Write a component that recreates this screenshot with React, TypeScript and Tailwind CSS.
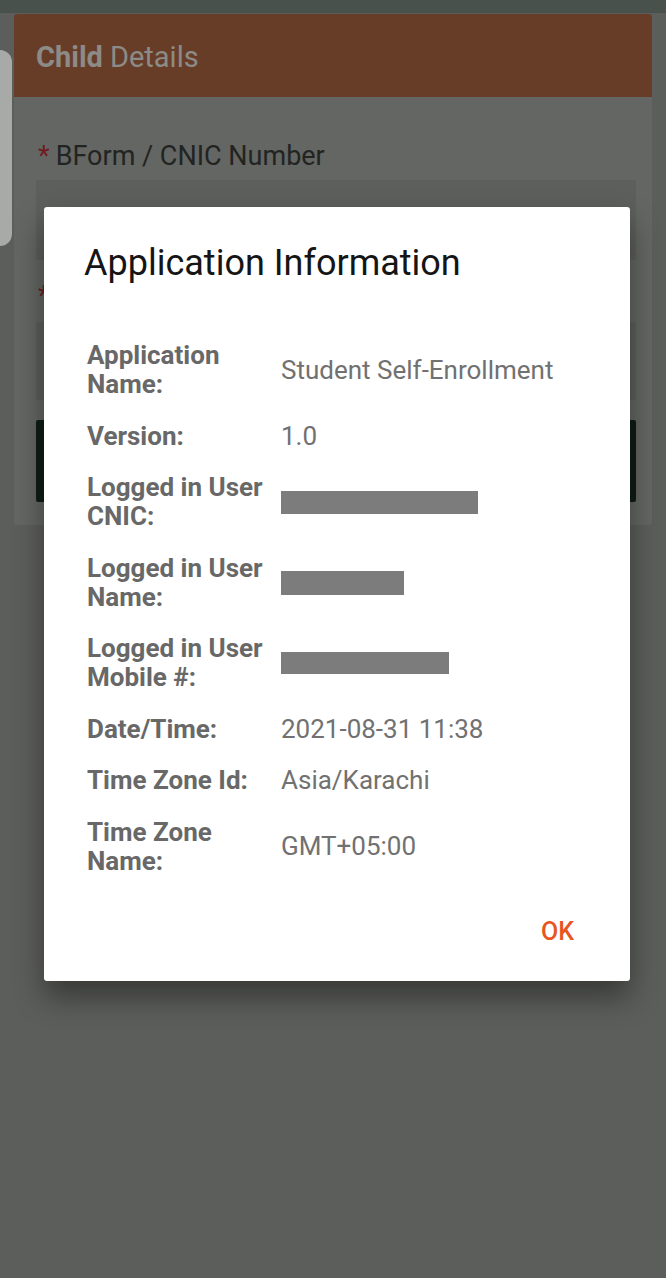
import React from "react";

type Row = {
  label: string[];
  value?: string;
  redact?: { w: string; h: string };
};

const rows: Row[] = [
  { label: ["Application", "Name:"], value: "Student Self-Enrollment" },
  { label: ["Version:"], value: "1.0" },
  { label: ["Logged in User", "CNIC:"], redact: { w: "w-[197px]", h: "h-[23px]" } },
  { label: ["Logged in User", "Name:"], redact: { w: "w-[123px]", h: "h-[24px]" } },
  { label: ["Logged in User", "Mobile #:"], redact: { w: "w-[168px]", h: "h-[22px]" } },
  { label: ["Date/Time:"], value: "2021-08-31 11:38" },
  { label: ["Time Zone Id:"], value: "Asia/Karachi" },
  { label: ["Time Zone", "Name:"], value: "GMT+05:00" },
];

function InfoRow({ row }: { row: Row }) {
  return (
    <div className="flex items-center">
      <div className="w-[194px] shrink-0 text-[26px] leading-[29px] font-bold text-[#686868]">
        {row.label.map((l) => (
          <div key={l}>{l}</div>
        ))}
      </div>
      {row.value ? (
        <div className="text-[26px] leading-[29px] text-[#717171]">{row.value}</div>
      ) : (
        <div className={`${row.redact!.w} ${row.redact!.h} bg-[#7c7c7c]`} />
      )}
    </div>
  );
}

export default function App() {
  return (
    <div
      className="relative w-[666px] h-[1278px] overflow-hidden bg-[#5c5e5b]"
      style={{ fontFamily: "Roboto, 'Liberation Sans', sans-serif" }}
    >
      <div className="h-[13px] bg-[#49514d]" />

      {/* dimmed page behind the dialog */}
      <div className="mx-[14px] mt-[1px] rounded-[3px] bg-[#646663] overflow-hidden">
        <div className="h-[83px] bg-[#683d28] flex items-center pl-[22px] pt-[4px] text-[29px] text-[#8c8b87]">
          <span className="font-bold">Child</span>
          <span className="ml-[7px]">Details</span>
        </div>
        <div className="pl-[22px] pr-[16px] pt-[44px] pb-[23px]">
          <div className="text-[27px] leading-[30px] text-[#222422]">
            <span className="text-[#6e1c22] mr-[6px] ml-[2px]">*</span>
            BForm / CNIC Number
          </div>
          <div className="mt-[9px] h-[80px] bg-[#5d5f5c] rounded-[2px]" />
          <div className="mt-[21px] h-[30px] text-[27px] leading-[30px] text-[#6e1c22]">
            <span className="ml-[2px]">*</span>
          </div>
          <div className="mt-[11px] h-[78px] bg-[#5d5f5c] rounded-[2px]" />
          <div className="mt-[20px] h-[82px] bg-[#0e1e16] rounded-[2px]" />
        </div>
      </div>

      {/* edge panel handle */}
      <div className="absolute left-0 top-[50px] w-[12px] h-[196px] rounded-r-[12px] bg-[#a8aaa7]" />

      {/* dialog */}
      <div className="absolute left-[44px] top-[207px] w-[586px] bg-white rounded-[3px] shadow-[0_16px_30px_rgba(0,0,0,0.4)] pt-[34px] pb-[34px]">
        <div className="pl-[40px] text-[36px] leading-[44px] text-[#151515]">
          Application Information
        </div>
        <div className="mt-[56px] pl-[43px] flex flex-col gap-[22.5px]">
          {rows.map((r) => (
            <InfoRow key={r.label.join(" ")} row={r} />
          ))}
        </div>
        <div className="mt-[41px] pr-[56px] flex justify-end">
          <span className="text-[25px] leading-[30px] font-medium text-[#e8561f]">OK</span>
        </div>
      </div>
    </div>
  );
}
